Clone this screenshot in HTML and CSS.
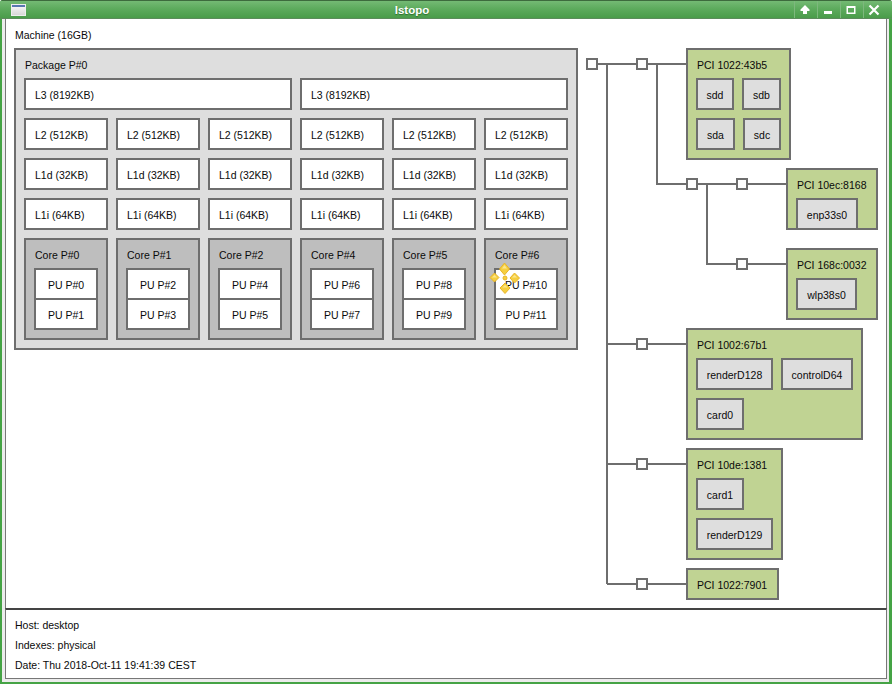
FILE: index.html
```html
<!DOCTYPE html>
<html lang="en">
<head>
<meta charset="utf-8">
<title>lstopo</title>
<link rel="stylesheet" href="styles.css">
</head>
<body>
<div class="window">
  <header class="titlebar">
    <span class="menu-btn"></span>
    <span class="title">lstopo</span>
    <div class="controls">
      <span class="ctl"><svg width="14" height="14" viewBox="0 0 14 14"><path d="M7 2 L11.500 6.500 V8 H9 V11 H5 V8 H2.500 V6.500 Z" fill="#fff"/></svg></span>
      <span class="ctl"><svg width="14" height="14" viewBox="0 0 14 14"><rect x="3" y="8" width="8" height="3" fill="#fff"/></svg></span>
      <span class="ctl"><svg width="14" height="14" viewBox="0 0 14 14"><path fill-rule="evenodd" d="M2.500 3 H11.500 V11 H2.500 Z M4 5 V9.500 H10 V5 Z" fill="#fff"/></svg></span>
      <span class="ctl"><svg width="14" height="14" viewBox="0 0 14 14"><path d="M2.500 2.500 L11.500 11.500 M11.500 2.500 L2.500 11.500" stroke="#fff" stroke-width="2.200" fill="none"/></svg></span>
    </div>
  </header>
  <div class="frame">
    <main class="canvas">
      <div class="machine-label">Machine (16GB)</div>
      <section class="package">
        <div class="pkg-label">Package P#0</div>
        <div class="row">
          <div class="box">L3 (8192KB)</div>
          <div class="box">L3 (8192KB)</div>
        </div>
        <div class="row">
          <div class="box">L2 (512KB)</div><div class="box">L2 (512KB)</div><div class="box">L2 (512KB)</div><div class="box">L2 (512KB)</div><div class="box">L2 (512KB)</div><div class="box">L2 (512KB)</div>
        </div>
        <div class="row">
          <div class="box">L1d (32KB)</div><div class="box">L1d (32KB)</div><div class="box">L1d (32KB)</div><div class="box">L1d (32KB)</div><div class="box">L1d (32KB)</div><div class="box">L1d (32KB)</div>
        </div>
        <div class="row">
          <div class="box">L1i (64KB)</div><div class="box">L1i (64KB)</div><div class="box">L1i (64KB)</div><div class="box">L1i (64KB)</div><div class="box">L1i (64KB)</div><div class="box">L1i (64KB)</div>
        </div>
        <div class="row">
          <div class="core"><div class="core-label">Core P#0</div><div class="pu">PU P#0</div><div class="pu">PU P#1</div></div>
          <div class="core"><div class="core-label">Core P#1</div><div class="pu">PU P#2</div><div class="pu">PU P#3</div></div>
          <div class="core"><div class="core-label">Core P#2</div><div class="pu">PU P#4</div><div class="pu">PU P#5</div></div>
          <div class="core"><div class="core-label">Core P#4</div><div class="pu">PU P#6</div><div class="pu">PU P#7</div></div>
          <div class="core"><div class="core-label">Core P#5</div><div class="pu">PU P#8</div><div class="pu">PU P#9</div></div>
          <div class="core"><div class="core-label">Core P#6</div><div class="pu">PU P#10</div><div class="pu">PU P#11</div></div>
        </div>
      </section>

      <svg class="wires" width="320" height="560" viewBox="580 44 320 560">
        <g stroke="#6e6e6e" stroke-width="2" fill="none">
          <path d="M598 64H687M607 64V584M657 64V184H787M707 184V264H787M607 344H687M607 464H687M607 584H687"/>
          <g fill="#fff">
            <rect x="587" y="59" width="10" height="10"/>
            <rect x="637" y="59" width="10" height="10"/>
            <rect x="687" y="179" width="10" height="10"/>
            <rect x="737" y="179" width="10" height="10"/>
            <rect x="737" y="259" width="10" height="10"/>
            <rect x="637" y="339" width="10" height="10"/>
            <rect x="637" y="459" width="10" height="10"/>
            <rect x="637" y="579" width="10" height="10"/>
          </g>
        </g>
      </svg>

      <section class="pci p1">
        <div class="pci-label">PCI 1022:43b5</div>
        <div class="devs"><div class="dev w38">sdd</div><div class="dev w39">sdb</div><div class="dev w39">sda</div><div class="dev w38">sdc</div></div>
      </section>
      <section class="pci p2">
        <div class="pci-label">PCI 10ec:8168</div>
        <div class="devs"><div class="dev w62">enp33s0</div></div>
      </section>
      <section class="pci p3">
        <div class="pci-label">PCI 168c:0032</div>
        <div class="devs"><div class="dev w61">wlp38s0</div></div>
      </section>
      <section class="pci p4">
        <div class="pci-label">PCI 1002:67b1</div>
        <div class="devs"><div class="dev w77">renderD128</div><div class="dev w72">controlD64</div><div class="dev w48">card0</div></div>
      </section>
      <section class="pci p5">
        <div class="pci-label">PCI 10de:1381</div>
        <div class="devs"><div class="dev w48">card1</div><div class="dev w77">renderD129</div></div>
      </section>
      <section class="pci p6">
        <div class="pci-label">PCI 1022:7901</div>
      </section>

      <svg class="cursor" width="32" height="32" viewBox="0 0 32 32">
        <g fill="#f6cf40" stroke="#e8b428" stroke-width="1" stroke-linejoin="round">
          <path d="M15.500 1 L20.500 7 L15.500 13 L10.500 7 Z"/>
          <path d="M5.500 11 L10 15.500 L5.500 20 L1 15.500 Z"/>
          <path d="M25.500 11 L30.500 16 L25.500 21 L21 16 Z"/>
          <path d="M16 21 L21 26 L16 31.500 L11 26 Z"/>
          <circle cx="16" cy="16" r="2"/>
        </g>
        <g fill="#fbe78c">
          <path d="M15.500 3 L18 6.500 H13 Z"/>
          <path d="M5.500 13 L8 15.500 H3 Z"/>
          <path d="M25.500 13 L28 15.500 H23 Z"/>
          <path d="M16 23 L18.500 25.500 H13.500 Z"/>
        </g>
      </svg>
    </main>
    <footer class="legend">
      <div>Host: desktop</div>
      <div>Indexes: physical</div>
      <div>Date: Thu 2018-Oct-11 19:41:39 CEST</div>
    </footer>
  </div>
</div>
</body>
</html>
```
FILE: styles.css
```css
* { box-sizing: border-box; }
html, body { margin: 0; height: 100%; }
body {
  font-family: "Liberation Sans", Arial, sans-serif;
  font-size: 10.500px;
  line-height: 12px;
  color: #0a0a0a;
  background: #fff;
}
.window {
  width: 892px;
  height: 684px;
  display: flex;
  flex-direction: column;
  background: #45a345;
  overflow: hidden;
  border-radius: 3px 3px 0 0;
}
.titlebar {
  height: 19px;
  flex: none;
  display: flex;
  align-items: center;
  background: linear-gradient(#74ba74, #5dab5d 45%, #4a9c4a);
  border-top: 1px solid #3d6b3d;
  border-bottom: 1px solid #5c8c5c;
  padding: 0 6px 0 11px;
}
.menu-btn {
  flex: none;
  width: 15px;
  height: 12px;
  background: linear-gradient(#5878b0 0 2px, #f4f4f4 2px, #d8d8d8);
  border: 1px solid #eee;
}
.title {
  flex: 1;
  padding-left: 4px;
  text-align: center;
  color: #fff;
  font-weight: bold;
  font-size: 11.500px;
  text-shadow: 0 1px 1px #2c6e2c;
}
.controls { display: flex; }
.ctl {
  width: 23px;
  height: 17px;
  padding-right: 2px;
  display: flex;
  align-items: center;
  justify-content: center;
  border-left: 1px solid #7db87d;
}
.frame {
  flex: 1;
  margin: 0 3px 2px 2px;
  padding: 0 2px 3px 3px;
  background: #ececec;
  display: flex;
  flex-direction: column;
  min-height: 0;
}
.canvas {
  position: relative;
  flex: 1;
  background: #fff;
  border-left: 1px solid #777;
  border-right: 1px solid #777;
}
.machine-label { padding: 10px 0 0 9px; height: 29px; }
.package {
  margin-left: 8px;
  width: 564px;
  height: 302px;
  background: #dedede;
  border: 2px solid #6e6e6e;
  padding: 9px 8px 8px;
  display: flex;
  flex-direction: column;
  gap: 8px;
}
.pkg-label { height: 12px; margin: 0 0 -1px 1px; }
.row { display: flex; gap: 8px; flex: none; }
.box {
  flex: 1;
  height: 32px;
  background: #fff;
  border: 2px solid #6e6e6e;
  padding: 9px 8px 0 9px;
}
.core {
  flex: 1;
  height: 102px;
  background: #bebebe;
  border: 2px solid #6e6e6e;
  padding: 9px 8px 0;
}
.core-label { height: 12px; margin: 0 0 7px 1px; }
.pu {
  height: 32px;
  background: #fff;
  border: 2px solid #6e6e6e;
  padding-top: 9px;
  text-align: center;
}
.pu + .pu { margin-top: -2px; }
.wires { position: absolute; left: 574px; top: 25px; overflow: visible; }
.pci {
  position: absolute;
  background: #c0d393;
  border: 2px solid #6e6e6e;
  padding: 9px 8px 8px;
}
.pci-label { height: 12px; margin-left: 1px; }
.devs { display: flex; flex-wrap: wrap; gap: 8px; margin-top: 7px; }
.dev {
  height: 32px;
  background: #dedede;
  border: 2px solid #6e6e6e;
  padding-top: 9px;
  text-align: center;
}
.w38 { width: 38px; }
.w39 { width: 39px; }
.w48 { width: 48px; }
.w61 { width: 61px; }
.w62 { width: 62px; }
.w72 { width: 72px; }
.w77 { width: 77px; }
.p1 { left: 680px; top: 29px; width: 105px; height: 112px; }
.p2 { left: 780px; top: 149px; width: 92px; height: 62px; }
.p3 { left: 780px; top: 229px; width: 92px; height: 72px; }
.p4 { left: 680px; top: 309px; width: 177px; height: 112px; }
.p5 { left: 680px; top: 429px; width: 97px; height: 112px; }
.p6 { left: 680px; top: 549px; width: 93px; height: 32px; }
.cursor { position: absolute; left: 483px; top: 243px; }
.legend {
  height: 71px;
  flex: none;
  background: #fff;
  border: 1px solid #777;
  border-top: 2px solid #444;
  padding: 5px 0 0 9px;
  line-height: 20px;
}
```
